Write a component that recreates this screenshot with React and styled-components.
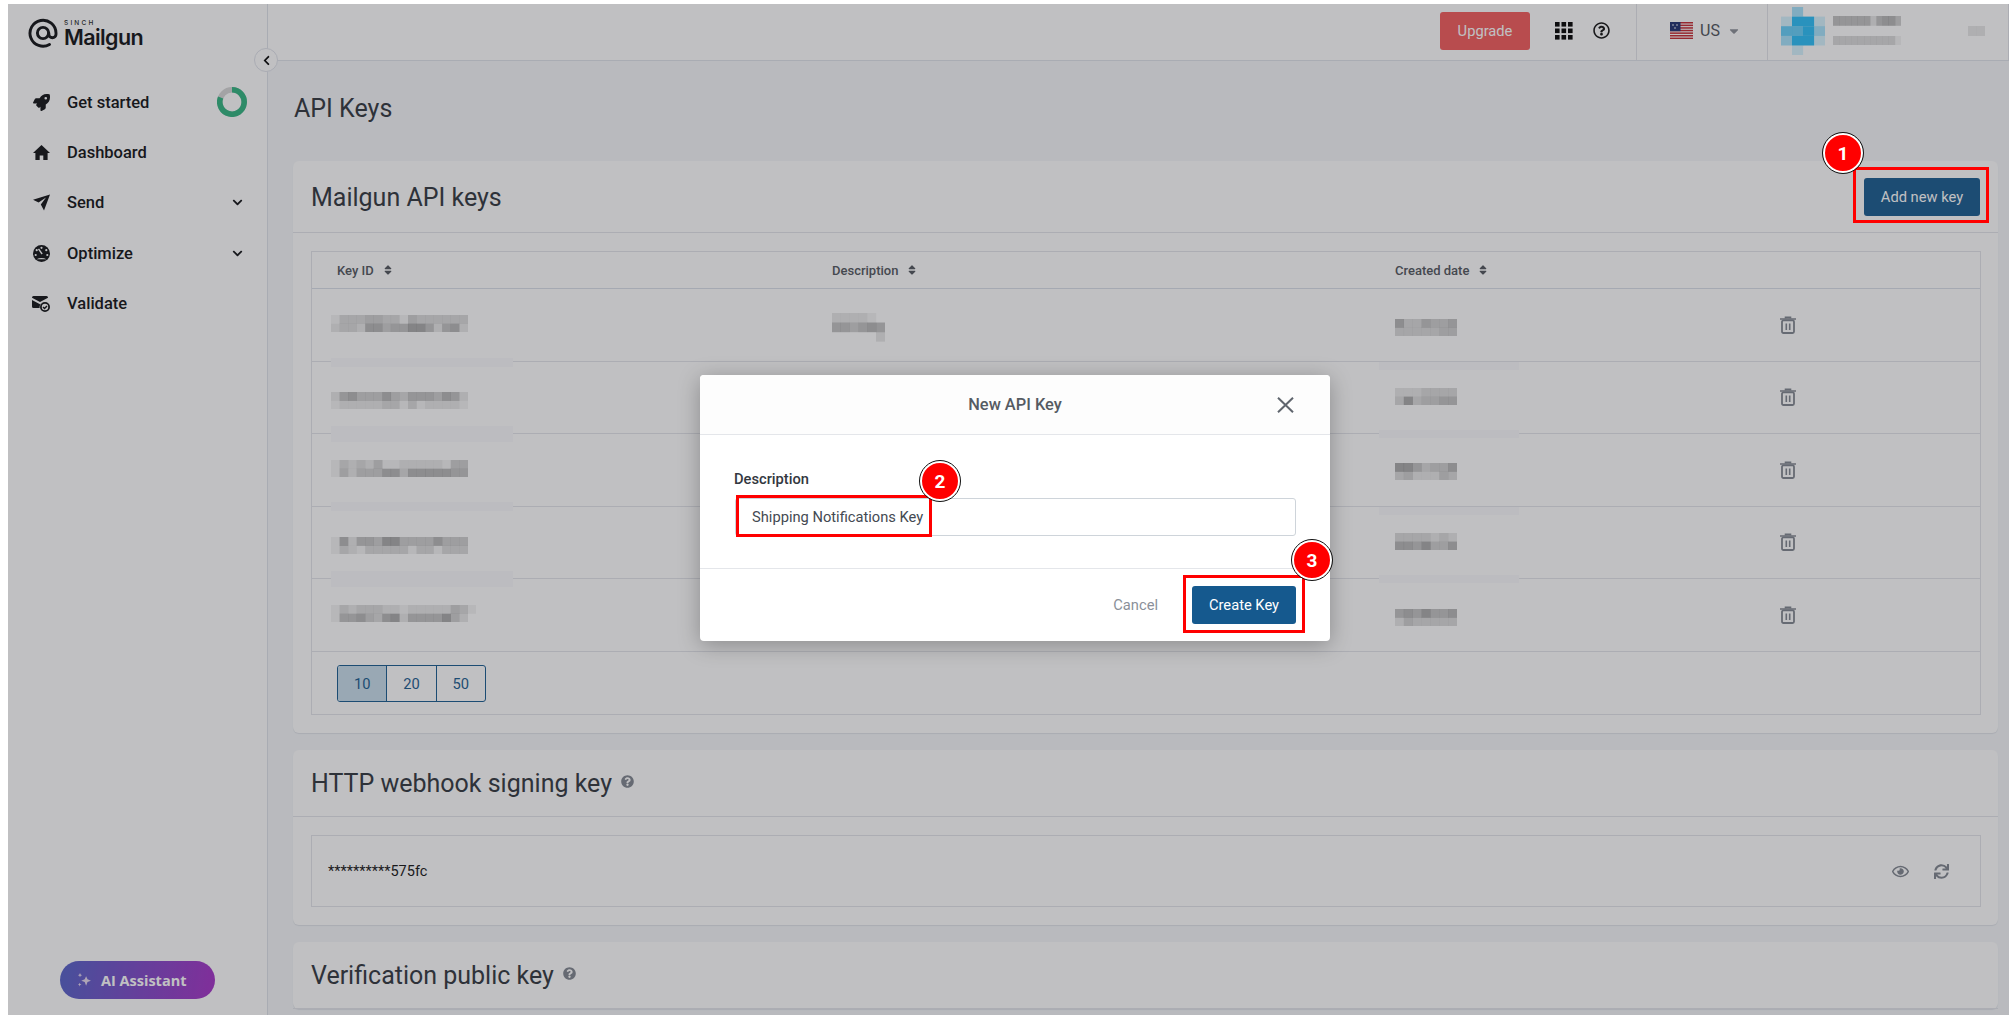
import React from 'react';
import styled, { createGlobalStyle } from 'styled-components';
import {
  FaRocket,
  FaChevronDown,
  FaChevronLeft,
  FaRegQuestionCircle,
  FaQuestionCircle,
  FaCaretDown,
  FaSort,
  FaRegEye,
  FaSync,
} from 'react-icons/fa';

const keyRows = [
  {
    id: ['13334433143333330', '23326645577525620'],
    idShift: 26,
    date: ['6335445', '3333344'],
    dateShift: 30,
    description: ['222210', '554565', '000002'],
    idStrip: [69, 9],
    dateStrip: 73,
  },
  {
    id: ['2564446435554652', '1222223313122221'],
    idShift: 30,
    date: ['2223333', '3734455'],
    dateShift: 26,
    idStrip: [64, 16],
    dateStrip: 68,
  },
  {
    id: ['1323241122222144', '1424446636666655'],
    idShift: 26,
    date: ['7753446', '3422243'],
    dateShift: 29,
    idStrip: [68, 9],
    dateStrip: 73,
  },
  {
    id: ['1625547744446444', '1321333331331333'],
    idShift: 30,
    date: ['3333232', '6657446'],
    dateShift: 26,
    idStrip: [64, 16],
    dateStrip: 68,
  },
  {
    id: ['13233322122222431', '15564367255557420'],
    idShift: 26,
    date: ['5657556', '2433333'],
    dateShift: 30,
  },
];

const avatarCells = [
  '.l..',
  'fssf',
  'mmsl',
  'lssf',
  '.f..',
];
const avatarColours = { s: 1, m: 0.72, l: 0.42, f: 0.2 };

const Censor = ({ lines, cell = 8.55, height = 8.7 }) => (
  <CensorSvg width={lines[0].length * cell} height={lines.length * height}>
    {lines.map((line, y) =>
      [...line].map((shade, x) => (
        <rect
          key={`${x}-${y}`}
          x={x * cell}
          y={y * height}
          width={cell + 0.2}
          height={height + 0.2}
          fill="#000"
          fillOpacity={Number(shade) * 0.048}
        />
      ))
    )}
  </CensorSvg>
);

const Avatar = () => (
  <AvatarSvg width="44" height="48">
    {avatarCells.map((line, y) =>
      [...line].map((c, x) =>
        c === '.' ? null : (
          <rect
            key={`${x}-${y}`}
            x={x * 11}
            y={y * 9.6}
            width="11.1"
            height="9.7"
            fill="#28bdf8"
            fillOpacity={avatarColours[c]}
          />
        )
      )
    )}
  </AvatarSvg>
);

const LogoMark = () => (
  <svg width="30" height="30" viewBox="0 0 30 30" fill="none" stroke="#0d0f12" strokeWidth="2.9">
    <path d="M21.5 26.5A13 13 0 1 1 28 15v1.2a3.6 3.6 0 0 1-7.2 0V15" strokeLinecap="round" />
    <circle cx="15" cy="15" r="5.6" />
  </svg>
);

const HomeIcon = () => (
  <svg width="17" height="15" viewBox="0 0 17 15" fill="#0d0f12">
    <path d="M8.5 0L0 8h2.4v7h4.3v-4.4h3.600V15h4.300V8H17z" />
  </svg>
);

const SendIcon = () => (
  <svg width="17" height="17" viewBox="0 0 17 17" fill="#0d0f12">
    <path d="M17 .5L0 5.800l5.600 2.700L13 3.500 7.800 10.500l3.200 6z" />
  </svg>
);

const GaugeIcon = () => (
  <svg width="17" height="17" viewBox="0 0 17 17">
    <circle cx="8.5" cy="8.5" r="8.5" fill="#0d0f12" />
    <circle cx="8.5" cy="2.8" r="1.1" fill="#fff" />
    <circle cx="3.7" cy="5.2" r="1.1" fill="#fff" />
    <circle cx="13.3" cy="5.2" r="1.1" fill="#fff" />
    <circle cx="2.7" cy="10" r="1.1" fill="#fff" />
    <circle cx="14.3" cy="10" r="1.1" fill="#fff" />
    <path d="M5.500 3.800l3.600 5.200" stroke="#fff" strokeWidth="1.4" />
    <path d="M3.500 14.200a7 3.200 0 0 1 10 0z" fill="#fff" />
  </svg>
);

const ValidateIcon = () => (
  <svg width="18" height="17" viewBox="0 0 18 17">
    <path d="M1.500 1h13A1.500 1.500 0 0 1 16 2.500v.3L8 7 0 2.800v-.3A1.500 1.500 0 0 1 1.500 1z" fill="#0d0f12" />
    <path d="M0 5l8 4.200 3.200-1.700A5.500 5.500 0 0 0 7.600 13H1.500A1.500 1.500 0 0 1 0 11.500z" fill="#0d0f12" />
    <circle cx="13" cy="12" r="4.1" fill="none" stroke="#0d0f12" strokeWidth="1.8" />
    <path d="M11 12l1.500 1.500 2.500-2.600" fill="none" stroke="#0d0f12" strokeWidth="1.4" />
  </svg>
);

const ProgressRing = () => (
  <svg width="30" height="30" viewBox="0 0 30 30" fill="none" strokeWidth="5.6">
    <circle cx="15" cy="15" r="12.2" stroke="#d6d6d6" />
    <path d="M15 2.800A12.200 12.200 0 1 1 3.600 10.600" stroke="#2eb37e" />
  </svg>
);

const GridIcon = () => (
  <svg width="18" height="18" viewBox="0 0 18 18" fill="#000">
    {[0, 6.5, 13].map(y =>
      [0, 6.5, 13].map(x => <rect key={`${x}-${y}`} x={x} y={y} width="4.6" height="4.6" />)
    )}
  </svg>
);

const Flag = () => (
  <svg width="23" height="17" viewBox="0 0 23 17">
    <rect width="23" height="17" fill="#fff" />
    {[0, 2.6, 5.2, 7.8, 10.4, 13, 15.6].map(y => (
      <rect key={y} y={y} width="23" height="1.5" fill="#c4262e" />
    ))}
    <rect width="10.5" height="9.2" fill="#1d2f6f" />
    <circle cx="3" cy="3" r=".8" fill="#fff" />
    <circle cx="7" cy="3" r=".8" fill="#fff" />
    <circle cx="5" cy="6" r=".8" fill="#fff" />
  </svg>
);

const TrashIcon = () => (
  <svg width="16" height="18" viewBox="0 0 16 18" fill="none" stroke="#7f858e">
    <path d="M0 3h16" strokeWidth="1.5" />
    <path d="M5.500 2.600V1.400h5v1.200" strokeWidth="1.6" />
    <rect x="2" y="4.4" width="12" height="12.6" rx="1.4" strokeWidth="1.8" />
    <path d="M6.300 7.500v6.500M9.700 7.500v6.500" strokeWidth="1.6" />
  </svg>
);

const CloseIcon = () => (
  <svg width="17" height="16" viewBox="0 0 17 16" stroke="#60666e" strokeWidth="2" fill="none">
    <path d="M1 .7l15 14.600M16 .7L1 15.300" />
  </svg>
);

const Sparkle = () => (
  <svg width="15" height="15" viewBox="0 0 14 14" fill="#e6d9ee">
    <path d="M8.500 3l1.300 2.900L13 7.200 9.800 8.500 8.500 12 7.200 8.500 4 7.200l3.200-1.300z" />
    <path d="M2.800 0l.6 1.400L4.800 2l-1.400.6-.6 1.400-.6-1.400L.8 2l1.400-.6z" />
    <path d="M2.500 9l.5 1.200 1.200.5-1.200.5-.5 1.300-.5-1.300-1.200-.5 1.200-.5z" />
  </svg>
);

const SortHead = ({ children }) => (
  <HeadCell>
    {children}
    <FaSort size={12} color="#4f545b" />
  </HeadCell>
);

const App = () => (
  <Frame>
    <GlobalStyle />
    <Sidebar>
      <Logo>
        <LogoMark />
        <LogoText>
          <Sinch>SINCH</Sinch>
          <Brand>Mailgun</Brand>
        </LogoText>
      </Logo>
      <Nav>
        <NavItem>
          <NavIcon><FaRocket size={17} /></NavIcon>
          Get started
          <NavEnd><ProgressRing /></NavEnd>
        </NavItem>
        <NavItem>
          <NavIcon><HomeIcon /></NavIcon>
          Dashboard
        </NavItem>
        <NavItem>
          <NavIcon><SendIcon /></NavIcon>
          Send
          <NavEnd $chevron><FaChevronDown size={11} /></NavEnd>
        </NavItem>
        <NavItem>
          <NavIcon><GaugeIcon /></NavIcon>
          Optimize
          <NavEnd $chevron><FaChevronDown size={11} /></NavEnd>
        </NavItem>
        <NavItem>
          <NavIcon><ValidateIcon /></NavIcon>
          Validate
        </NavItem>
      </Nav>
      <Assistant>
        <Sparkle />
        AI Assistant
      </Assistant>
    </Sidebar>

    <CollapseButton>
      <FaChevronLeft size={11} />
    </CollapseButton>

    <Main>
      <TopBar>
        <Upgrade>Upgrade</Upgrade>
        <TopIcons>
          <GridIcon />
          <FaRegQuestionCircle size={17} color="#111" />
        </TopIcons>
        <Locale>
          <Flag />
          <span>US</span>
          <FaCaretDown size={14} color="#8a8f96" />
        </Locale>
        <UserBlock>
          <Avatar />
          <UserText>
            <Censor lines={['55555525664']} cell={6.2} height={9.6} />
            <Censor lines={['33333333331']} cell={6.2} height={9.6} />
          </UserText>
          <Censor lines={['22']} cell={8.5} height={10} />
        </UserBlock>
      </TopBar>

      <Content>
        <PageTitle>API Keys</PageTitle>

        <Card>
          <CardHeader $tall>
            <CardTitle>Mailgun API keys</CardTitle>
            <PrimaryButton $wide>Add new key</PrimaryButton>
          </CardHeader>
          <CardBody>
            <Table>
              <TableHead>
                <SortHead>Key ID</SortHead>
                <SortHead>Description</SortHead>
                <SortHead>Created date</SortHead>
              </TableHead>
              {keyRows.map((row, i) => (
                <TableRow key={i}>
                  <CensorCell $shift={row.idShift}>
                    <Censor lines={row.id} />
                  </CensorCell>
                  <CensorCell $shift={24}>
                    {row.description && <Censor lines={row.description} cell={8.8} height={9.5} />}
                  </CensorCell>
                  <CensorCell $shift={row.dateShift}>
                    <Censor lines={row.date} cell={8.85} height={8.6} />
                  </CensorCell>
                  <TrashCell>
                    <TrashIcon />
                  </TrashCell>
                  {row.idStrip && <IdStrip $top={row.idStrip[0]} $height={row.idStrip[1]} />}
                  {row.dateStrip && <DateStrip $top={row.dateStrip} />}
                </TableRow>
              ))}
              <TableFoot>
                <PageSizes>
                  <PageSize $active>10</PageSize>
                  <PageSize>20</PageSize>
                  <PageSize>50</PageSize>
                </PageSizes>
              </TableFoot>
            </Table>
          </CardBody>
        </Card>

        <Card>
          <CardHeader>
            <CardTitle>HTTP webhook signing key</CardTitle>
            <TitleHelp><FaQuestionCircle size={13} color="#7f858e" /></TitleHelp>
          </CardHeader>
          <CardBody>
            <KeyBox>
              **********575fc
              <KeyActions>
                <FaRegEye size={17} />
                <FaSync size={15} />
              </KeyActions>
            </KeyBox>
          </CardBody>
        </Card>

        <Card>
          <CardHeader>
            <CardTitle>Verification public key</CardTitle>
            <TitleHelp><FaQuestionCircle size={13} color="#7f858e" /></TitleHelp>
          </CardHeader>
        </Card>
      </Content>
    </Main>

    <Backdrop />

    <Modal>
      <ModalHeader>
        <span />
        <ModalTitle>New API Key</ModalTitle>
        <CloseButton>
          <CloseIcon />
        </CloseButton>
      </ModalHeader>
      <ModalBody>
        <FieldLabel>Description</FieldLabel>
        <FieldInput readOnly value="Shipping Notifications Key" />
      </ModalBody>
      <ModalFooter>
        <CancelLink>Cancel</CancelLink>
        <PrimaryButton>Create Key</PrimaryButton>
      </ModalFooter>
    </Modal>

    <RedBox $left={1845} $top={163} $width={136} $height={56} />
    <RedBox $left={728} $top={491} $width={196} $height={42} />
    <RedBox $left={1175} $top={571} $width={122} $height={58} />
    <StepBadge $left={1835} $top={149}>1</StepBadge>
    <StepBadge $left={932} $top={477}>2</StepBadge>
    <StepBadge $left={1304} $top={556}>3</StepBadge>
  </Frame>
);

export default App;

const GlobalStyle = createGlobalStyle`
  * {
    box-sizing: border-box;
  }
  body {
    margin: 0;
    background: #fff;
    font-family: Roboto, "Liberation Sans", sans-serif;
  }
`;

const Frame = styled.div`
  position: relative;
  display: flex;
  width: 2001px;
  height: 1011px;
  margin: 4px 0 0 8px;
  overflow: hidden;
  background: #f5f7fa;
`;

const Sidebar = styled.aside`
  position: relative;
  display: flex;
  flex-direction: column;
  flex: 0 0 260px;
  background: #fff;
  border-right: 1px solid #dfe2ea;
`;

const Logo = styled.div`
  display: flex;
  align-items: flex-start;
  gap: 6px;
  padding: 14px 0 0 20px;
  height: 73px;
`;

const LogoText = styled.div`
  display: flex;
  flex-direction: column;
`;

const Sinch = styled.span`
  font: 500 6.5px/6px Inter, sans-serif;
  letter-spacing: 2.2px;
  color: #1c1f24;
  margin-top: 2px;
  margin-bottom: -1px;
`;

const Brand = styled.span`
  font: 600 21.5px/24px Inter, sans-serif;
  letter-spacing: -0.6px;
  color: #0d0f12;
`;

const Nav = styled.nav`
  display: flex;
  flex-direction: column;
`;

const NavItem = styled.div`
  display: flex;
  align-items: center;
  height: 50.3px;
  padding: 0 20px 0 24px;
  font-size: 16.5px;
  font-weight: 500;
  color: #0d0f12;
`;

const NavIcon = styled.span`
  display: flex;
  justify-content: center;
  width: 18px;
  margin-right: 17px;
`;

const NavEnd = styled.span`
  display: flex;
  margin-left: auto;
  margin-right: ${p => (p.$chevron ? '4px' : '0')};
`;

const Assistant = styled.button`
  display: flex;
  align-items: center;
  gap: 9px;
  position: absolute;
  left: 52px;
  bottom: 16px;
  width: 155px;
  height: 38px;
  padding: 0 0 0 17px;
  border: 0;
  border-radius: 19px;
  background: linear-gradient(100deg, #5260c8, #a52fc6);
  color: #fff;
  font: 700 14.5px "Open Sans", sans-serif;
`;

const CollapseButton = styled.button`
  position: absolute;
  left: 246px;
  top: 44px;
  display: flex;
  align-items: center;
  justify-content: center;
  width: 24px;
  height: 24px;
  padding: 0;
  border: 1px solid #dfe2ea;
  border-radius: 50%;
  background: #fff;
  color: #000;
  z-index: 1;
`;

const Main = styled.main`
  flex: 1;
  display: flex;
  flex-direction: column;
  min-width: 0;
`;

const TopBar = styled.header`
  display: flex;
  align-items: center;
  justify-content: flex-end;
  flex: 0 0 57px;
  background: #fff;
  border-bottom: 1px solid #dfe2ea;
`;

const Upgrade = styled.button`
  width: 90px;
  height: 38px;
  margin: 0 25px 3px 0;
  padding: 0;
  border: 0;
  border-radius: 3px;
  background: #f4595a;
  color: #fff;
  font: 400 14.7px Roboto, sans-serif;
`;

const TopIcons = styled.div`
  display: flex;
  align-items: center;
  gap: 20px;
  margin: 0 26px 3px 0;
`;

const Locale = styled.div`
  display: flex;
  align-items: center;
  gap: 7px;
  align-self: stretch;
  width: 131px;
  padding: 0 0 3px 33px;
  border-left: 1px solid #e2e4ea;
  color: #4c5158;
  font-size: 16px;
`;

const UserBlock = styled.div`
  display: flex;
  align-items: center;
  align-self: stretch;
  width: 242px;
  padding: 0 0 3px 13px;
  border-left: 1px solid #e2e4ea;
  border-right: 1px solid #e2e4ea;
`;

const AvatarSvg = styled.svg`
  display: block;
  filter: blur(0.5px);
`;

const UserText = styled.div`
  display: flex;
  flex-direction: column;
  gap: 10px;
  margin: 0 67px 0 8px;
`;

const CensorSvg = styled.svg`
  display: block;
  filter: blur(0.4px);
`;

const Content = styled.div`
  padding: 0 11px 0 25px;
`;

const PageTitle = styled.h1`
  margin: 0;
  padding: 30px 0 0 1px;
  height: 100px;
  font-size: 25px;
  line-height: 36px;
  font-weight: 400;
  color: #2f343c;
`;

const Card = styled.section`
  margin-bottom: 17px;
  background: #fff;
  border-radius: 6px;
  box-shadow: 0 1px 1px rgba(40, 50, 80, 0.1);
`;

const CardHeader = styled.div`
  display: flex;
  align-items: center;
  gap: 9px;
  height: ${p => (p.$tall ? '72px' : '67px')};
  padding: 0 18px 0 18px;
  border-bottom: 1px solid #e2e4ea;
`;

const CardTitle = styled.h2`
  margin: 1px 0 0;
  font-size: 25px;
  font-weight: 400;
  color: #2f343c;
`;

const TitleHelp = styled.span`
  display: flex;
  margin-bottom: 4px;
`;

const PrimaryButton = styled.button`
  width: ${p => (p.$wide ? '116px' : '104px')};
  height: 38px;
  margin-left: ${p => (p.$wide ? 'auto' : '0')};
  padding: 0;
  border: 0;
  border-radius: 3px;
  background: #15598e;
  color: #fff;
  font: 400 14.7px Roboto, sans-serif;
`;

const CardBody = styled.div`
  padding: 18px 17px 18px 18px;
`;

const Table = styled.div`
  display: flex;
  flex-direction: column;
  border: 1px solid #e2e4ea;
  height: 464px;
`;

const columns = '495px 563px 385px 1fr';

const TableHead = styled.div`
  display: grid;
  grid-template-columns: ${columns};
  align-items: center;
  flex: 0 0 37px;
  border-bottom: 1px solid #d8dee9;
`;

const HeadCell = styled.div`
  display: flex;
  align-items: center;
  gap: 8px;
  padding-left: 25px;
  font-size: 13px;
  font-weight: 500;
  color: #4f545b;
`;

const TableRow = styled.div`
  position: relative;
  display: grid;
  grid-template-columns: ${columns};
  flex: 0 0 72.5px;
  border-bottom: 1px solid #e2e4ea;
`;

const CensorCell = styled.div`
  align-self: start;
  padding-left: 25px;
  margin-top: ${p => p.$shift}px;
  &:first-child {
    padding-left: 19px;
  }
`;

const TrashCell = styled.div`
  display: flex;
  align-items: center;
  padding-left: 25px;
`;

const IdStrip = styled.div`
  position: absolute;
  left: 19px;
  top: ${p => p.$top}px;
  width: 182px;
  height: ${p => p.$height}px;
  background: #fafafc;
`;

const DateStrip = styled.div`
  position: absolute;
  left: 1067px;
  top: ${p => p.$top}px;
  width: 140px;
  height: 8px;
  background: #fafafc;
`;

const TableFoot = styled.div`
  padding: 13.5px 25px;
`;

const PageSizes = styled.div`
  display: flex;
  width: 149px;
  height: 37px;
  border: 1px solid #15598e;
  border-radius: 3px;
  overflow: hidden;
`;

const PageSize = styled.div`
  flex: 1;
  display: flex;
  align-items: center;
  justify-content: center;
  font-size: 14.7px;
  color: #15598e;
  background: ${p => (p.$active ? '#c8ddeb' : 'transparent')};
  & + & {
    border-left: 1px solid #15598e;
  }
`;

const KeyBox = styled.div`
  display: flex;
  align-items: center;
  justify-content: space-between;
  height: 72px;
  padding: 0 31px 0 16px;
  border: 1px solid #e2e4ea;
  font-size: 14.5px;
  color: #111;
`;

const KeyActions = styled.div`
  display: flex;
  align-items: center;
  gap: 25px;
  color: #7f858e;
`;

const Backdrop = styled.div`
  position: absolute;
  inset: 0;
  background: rgba(47, 47, 54, 0.3);
  z-index: 2;
`;

const Modal = styled.div`
  position: absolute;
  left: 692px;
  top: 371px;
  width: 630px;
  height: 266px;
  background: #fff;
  border-radius: 4px;
  box-shadow: 0 4px 22px rgba(0, 0, 0, 0.28);
  z-index: 3;
`;

const ModalHeader = styled.div`
  display: grid;
  grid-template-columns: 1fr auto 1fr;
  align-items: center;
  height: 60px;
  background: #fdfdfd;
  border-bottom: 1px solid #e4e6ea;
  border-radius: 4px 4px 0 0;
`;

const ModalTitle = styled.h3`
  margin: 0;
  font-size: 16.4px;
  font-weight: 500;
  color: #555b63;
`;

const CloseButton = styled.div`
  justify-self: end;
  display: flex;
  margin-right: 36px;
`;

const ModalBody = styled.div`
  display: flex;
  flex-direction: column;
  height: 134px;
  padding: 35px 35px 0 34px;
  border-bottom: 1px solid #e4e6ea;
`;

const FieldLabel = styled.label`
  font-size: 14.7px;
  line-height: 18px;
  font-weight: 500;
  color: #33383f;
  margin-bottom: 10px;
`;

const FieldInput = styled.input`
  width: 561px;
  height: 38px;
  margin-left: 1px;
  padding: 0 16px;
  border: 1px solid #ced4da;
  border-radius: 3px;
  outline: 0;
  font: 400 14.7px Roboto, sans-serif;
  color: #444a52;
`;

const ModalFooter = styled.div`
  display: flex;
  align-items: center;
  justify-content: flex-end;
  gap: 34px;
  height: 72px;
  padding: 0 34px 0 0;
`;

const CancelLink = styled.span`
  font-size: 14.7px;
  color: #8a9099;
`;

const RedBox = styled.div`
  position: absolute;
  left: ${p => p.$left}px;
  top: ${p => p.$top}px;
  width: ${p => p.$width}px;
  height: ${p => p.$height}px;
  border: 3px solid #f00;
  z-index: 4;
`;

const StepBadge = styled.div`
  position: absolute;
  left: ${p => p.$left - 20}px;
  top: ${p => p.$top - 20}px;
  display: flex;
  align-items: center;
  justify-content: center;
  width: 40px;
  height: 40px;
  border-radius: 50%;
  background: #f00;
  border: 2px solid #fff;
  outline: 1.5px solid #111;
  color: #fff;
  font-size: 19px;
  font-weight: 700;
  z-index: 5;
`;
